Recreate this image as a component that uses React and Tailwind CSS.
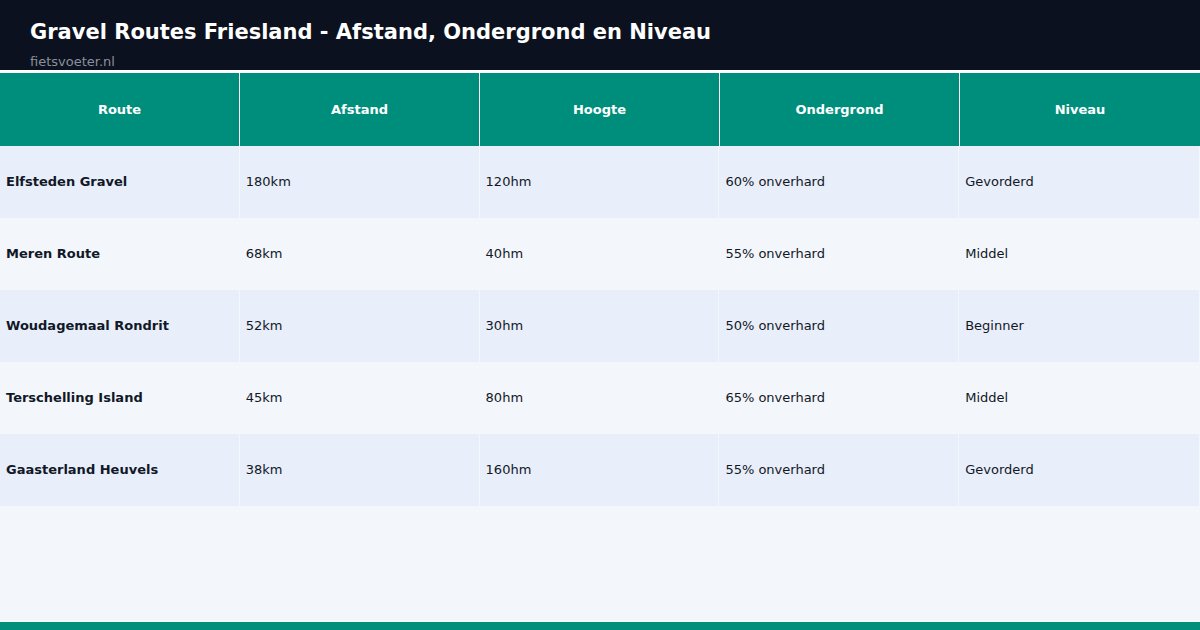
const rows = [
  ['Elfsteden Gravel', '180km', '120hm', '60% onverhard', 'Gevorderd'],
  ['Meren Route', '68km', '40hm', '55% onverhard', 'Middel'],
  ['Woudagemaal Rondrit', '52km', '30hm', '50% onverhard', 'Beginner'],
  ['Terschelling Island', '45km', '80hm', '65% onverhard', 'Middel'],
  ['Gaasterland Heuvels', '38km', '160hm', '55% onverhard', 'Gevorderd'],
];
const heads = ['Route', 'Afstand', 'Hoogte', 'Ondergrond', 'Niveau'];

export default function App() {
  return (
    <div className="flex h-[630px] w-[1200px] flex-col bg-[#f3f6fb]" style={{ fontFamily: '"DejaVu Sans", sans-serif' }}>
      <div className="h-[70px] bg-[#0b111e] px-[30px] pt-[19px]">
        <h1 className="text-[21px] font-bold leading-[26px] text-white">Gravel Routes Friesland - Afstand, Ondergrond en Niveau</h1>
        <div className="mt-[9px] text-[13px] leading-[16px] text-[#8a909b]">fietsvoeter.nl</div>
      </div>
      <div className="h-[3px] bg-white" />
      <div className="grid h-[73px] grid-cols-5 bg-[#008e7c]">
        {heads.map((h, i) => (
          <div key={h} className={`flex items-center justify-center text-[13px] font-bold text-white ${i < 4 ? 'border-r border-white' : ''}`}>{h}</div>
        ))}
      </div>
      {rows.map((r, ri) => (
        <div key={r[0]} className={`grid h-[72px] w-[1199px] grid-cols-5 ${ri % 2 === 0 ? 'bg-[#e8eefa]' : 'bg-[#f3f6fb]'}`}>
          {r.map((c, i) => (
            <div key={i} className={`flex items-center px-[6px] text-[13px] text-[#111827] ${i === 0 ? 'font-bold' : ''} ${i < 4 ? 'border-r border-[#f3f6fb]' : ''}`}>{c}</div>
          ))}
        </div>
      ))}
      <div className="flex-1" />
      <div className="h-[8px] bg-[#008e7c]" />
    </div>
  );
}
